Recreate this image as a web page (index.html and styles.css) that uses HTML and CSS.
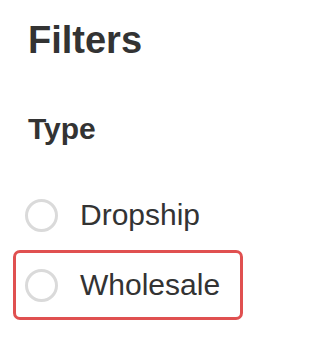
FILE: index.html
```html
<!DOCTYPE html>
<html>
<head>
<meta charset="utf-8">
<link rel="stylesheet" href="styles.css">
</head>
<body>
<div class="panel">
  <h1 class="title">Filters</h1>
  <h2 class="section">Type</h2>
  <div class="options">
    <label class="option"><span class="radio"></span><span class="label">Dropship</span></label>
    <label class="option focused"><span class="radio"></span><span class="label">Wholesale</span></label>
  </div>
</div>
</body>
</html>
```
FILE: styles.css
```css
html, body {
  margin: 0;
  padding: 0;
  background: #ffffff;
}
body {
  font-family: "Liberation Sans", Arial, sans-serif;
  color: #333333;
}
.panel {
  padding: 18px 0 0 13px;
}
.title {
  margin: 0;
  padding-left: 15px;
  font-size: 38px;
  font-weight: bold;
  line-height: 44px;
  color: #333333;
}
.section {
  margin: 50px 0 0 0;
  padding-left: 15px;
  font-size: 30px;
  font-weight: bold;
  line-height: 34px;
  color: #333333;
}
.options {
  margin-top: 34px;
  display: flex;
  flex-direction: column;
}
.option {
  box-sizing: border-box;
  width: 230px;
  height: 70px;
  border: 3px solid transparent;
  border-radius: 7px;
  padding: 0 9px;
  display: flex;
  align-items: center;
  gap: 22px;
}
.option.focused {
  border-color: #e05050;
}
.radio {
  box-sizing: border-box;
  width: 33px;
  height: 33px;
  border: 3px solid #dadada;
  border-radius: 50%;
  flex: none;
}
.label {
  font-size: 30px;
  line-height: 34px;
  color: #333333;
}
```
